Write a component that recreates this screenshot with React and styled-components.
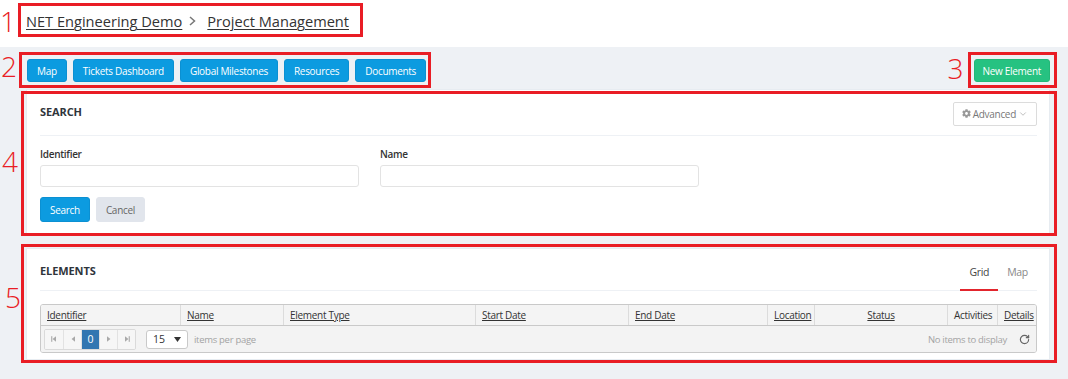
import React from "react";
import styled, { createGlobalStyle } from "styled-components";
import { ChevronDown, RotateCw } from "lucide-react";
import { FaCog } from "react-icons/fa";

const RED = "#e91d25";

const GlobalStyle = createGlobalStyle`
  html, body { margin: 0; padding: 0; }
  body {
    background: #eef1f5;
    font-family: "Open Sans", "Noto Sans", sans-serif;
    color: #333;
  }
  * { box-sizing: border-box; }
`;

const tones = {
  blue: { bg: "#0c9be0", border: "#0b90d2", fg: "#fff" },
  green: { bg: "#26c281", border: "#22b878", fg: "#fff" },
  grey: { bg: "#e1e5ec", border: "#e1e5ec", fg: "#666" },
};

// annotation overlay: red frame + number
const Mark = styled.div`
  position: relative;
  display: ${(p) => (p.$block ? "block" : "flex")};
  width: ${(p) => (p.$block ? "auto" : "fit-content")};
`;

const Frame = styled.div`
  position: absolute;
  top: ${(p) => p.$t}px;
  right: ${(p) => p.$r}px;
  bottom: ${(p) => p.$b}px;
  left: ${(p) => p.$l}px;
  border: 3px solid ${RED};
  pointer-events: none;
  z-index: 5;
`;

const Num = styled.span`
  position: absolute;
  left: ${(p) => p.$x}px;
  top: ${(p) => p.$y}px;
  font-size: 28px;
  line-height: 1;
  font-weight: 300;
  color: ${RED};
  z-index: 5;
`;

const Page = styled.div`
  min-height: 379px;
  background: #eef1f5;
`;

const TopBar = styled.header`
  background: #fff;
  height: 47px;
  padding: 11px 0 0 26px;
`;

const Crumbs = styled.nav`
  display: flex;
  align-items: center;
  font-size: 14.6px;
  line-height: 20px;
`;

const CrumbLink = styled.a`
  color: #333;
  text-decoration: underline;
  text-underline-offset: 2px;
  text-decoration-thickness: 1px;
`;

const CrumbSep = styled.span`
  display: flex;
  margin: 0 11px 0 7px;
`;

const Main = styled.main`
  padding: 12px 18px 0 26px;
`;

const Toolbar = styled.div`
  display: flex;
  justify-content: space-between;
  align-items: center;
`;

const ButtonGroup = styled.div`
  display: flex;
  gap: 6px;
  margin-left: 1px;
`;

const Btn = styled.button`
  font-family: inherit;
  font-size: 10px;
  letter-spacing: -0.3px;
  line-height: 1;
  height: ${(p) => p.$h || 23}px;
  padding: 0 ${(p) => p.$pad || 9}px;
  border-radius: 3px;
  border: 1px solid ${(p) => tones[p.$tone].border};
  background: ${(p) => tones[p.$tone].bg};
  color: ${(p) => tones[p.$tone].fg};
  cursor: pointer;
`;

const Cards = styled.div`
  display: flex;
  flex-direction: column;
  gap: 14px;
  margin-top: 7px;
`;

const Card = styled.section`
  background: #fff;
  border: 1px solid #e7ecf1;
  padding: 0 12px ${(p) => p.$pb}px 13px;
`;

const CardHead = styled.div`
  display: flex;
  align-items: center;
  justify-content: space-between;
  height: ${(p) => p.$h}px;
  border-bottom: 1px solid #eef1f5;
  padding-top: ${(p) => p.$pt || 0}px;
  padding-bottom: ${(p) => p.$pb || 0}px;
`;

const CardTitle = styled.h3`
  margin: 0;
  font-size: 11px;
  font-weight: 700;
  color: #2f353b;
  letter-spacing: -0.1px;
`;

const Advanced = styled.button`
  display: flex;
  align-items: center;
  gap: 2px;
  height: 24px;
  padding: 0 8px;
  margin-top: 5px;
  background: #fff;
  border: 1px solid #dcdcdc;
  border-radius: 2px;
  font-family: inherit;
  font-size: 10px;
  letter-spacing: -0.3px;
  color: #777;
`;

const FieldRow = styled.div`
  display: grid;
  grid-template-columns: 319px 319px;
  column-gap: 21px;
  margin-top: 11px;
`;

const Field = styled.div`
  display: flex;
  flex-direction: column;
  gap: 4px;
`;

const Label = styled.label`
  font-size: 10px;
  font-weight: 600;
  letter-spacing: -0.3px;
  line-height: 14px;
  color: #333;
`;

const Input = styled.input`
  height: 22px;
  border: 1px solid #e3e3e3;
  border-radius: 3px;
  background: #fff;
  outline: none;
`;

const Actions = styled.div`
  display: flex;
  gap: 6px;
  margin-top: 10px;
`;

const Tabs = styled.div`
  display: flex;
  align-self: stretch;
`;

const Tab = styled.div`
  display: flex;
  align-items: center;
  padding: 4px 9px 0;
  margin-bottom: -1px;
  border-bottom: 2px solid ${(p) => (p.$active ? "#e2252d" : "transparent")};
  font-size: 10.5px;
  letter-spacing: -0.3px;
  color: ${(p) => (p.$active ? "#444" : "#888")};
`;

const Table = styled.div`
  margin-top: 13px;
  border: 1px solid #c9c9c9;
  border-radius: 3px;
  overflow: hidden;
`;

const HeadRow = styled.div`
  display: grid;
  grid-template-columns: 139px 103px 192px 153px 139px 47px 133px 50px 1fr;
  height: 21px;
  background: #f4f4f4;
  border-bottom: 1px solid #c9c9c9;
`;

const Th = styled.div`
  display: flex;
  align-items: center;
  justify-content: ${(p) => (p.$center ? "center" : "flex-start")};
  padding-left: ${(p) => (p.$center ? 0 : 6)}px;
  border-left: ${(p) => (p.$first ? "none" : "1px solid #dcdcdc")};
  font-size: 10px;
  letter-spacing: -0.3px;
  color: #333;
  white-space: nowrap;
  text-decoration: ${(p) => (p.$plain ? "none" : "underline")};
  text-underline-offset: 1px;
`;

const PagerRow = styled.div`
  display: flex;
  align-items: center;
  height: 26px;
  padding: 0 6px 0 3px;
  background: #f3f3f3;
`;

const PageBtns = styled.div`
  display: flex;
  border: 1px solid #dadada;
  border-radius: 2px;
  overflow: hidden;
`;

const PageBtn = styled.div`
  display: flex;
  align-items: center;
  justify-content: center;
  width: 18px;
  height: 19px;
  border-left: ${(p) => (p.$first ? "none" : "1px solid #e2e2e2")};
  background: ${(p) => (p.$current ? "#3276b1" : "#f6f6f6")};
  color: #fff;
  font-size: 10.5px;
`;

const SizeSelect = styled.div`
  display: flex;
  align-items: center;
  justify-content: space-between;
  width: 42px;
  height: 19px;
  margin-left: 10px;
  padding: 0 6px 0 6px;
  background: #fff;
  border: 1px solid #c9c9c9;
  border-radius: 3px;
  font-size: 10.5px;
  color: #333;
`;

const Muted = styled.span`
  font-size: 9.5px;
  letter-spacing: -0.3px;
  color: #a3a3a3;
  margin-left: ${(p) => p.$ml || 0}px;
`;

const Spacer = styled.div`
  flex: 1;
`;

const Refresh = styled.span`
  display: flex;
  margin-left: 12px;
  color: #666;
`;

const Arrow = ({ dir, bar }) => (
  <svg width="8" height="8" viewBox="0 0 8 8">
    {dir === "left" ? (
      <path d="M6 1.2 L2.6 4 L6 6.8Z" fill="#a9a9a9" />
    ) : (
      <path d="M2 1.2 L5.4 4 L2 6.8Z" fill="#a9a9a9" />
    )}
    {bar &&
      (dir === "left" ? (
        <rect x="1.2" y="1.2" width="1.1" height="5.6" fill="#a9a9a9" />
      ) : (
        <rect x="5.7" y="1.2" width="1.1" height="5.6" fill="#a9a9a9" />
      ))}
  </svg>
);

const columns = [
  { name: "Identifier" },
  { name: "Name" },
  { name: "Element Type" },
  { name: "Start Date" },
  { name: "End Date" },
  { name: "Location" },
  { name: "Status", center: true },
  { name: "Activities", plain: true },
  { name: "Details" },
];

const navButtons = ["Map", "Tickets Dashboard", "Global Milestones", "Resources", "Documents"];

export default function App() {
  return (
    <Page>
      <GlobalStyle />
      <TopBar>
        <Mark>
          <Crumbs>
            <CrumbLink href="#">NET Engineering Demo</CrumbLink>
            <CrumbSep>
              <svg width="7" height="10" viewBox="0 0 7 10">
                <path d="M1 1 L5.5 5 L1 9" fill="none" stroke="#777" strokeWidth="1.5" />
              </svg>
            </CrumbSep>
            <CrumbLink href="#">Project Management</CrumbLink>
          </Crumbs>
          <Frame $t={-8} $r={-14} $b={-6} $l={-8} />
          <Num $x={-26} $y={-4}>1</Num>
        </Mark>
      </TopBar>

      <Main>
        <Toolbar>
          <Mark>
            <ButtonGroup>
              {navButtons.map((b) => (
                <Btn key={b} $tone="blue">{b}</Btn>
              ))}
            </ButtonGroup>
            <Frame $t={-7} $r={-5} $b={-6} $l={-7} />
            <Num $x={-25} $y={-7}>2</Num>
          </Mark>
          <Mark>
            <Btn $tone="green" $pad={8}>New Element</Btn>
            <Frame $t={-7} $r={-7} $b={-6} $l={-6} />
            <Num $x={-26} $y={-5}>3</Num>
          </Mark>
        </Toolbar>

        <Cards>
          <Mark $block>
            <Card $pb={11}>
              <CardHead $h={46} $pb={3}>
                <CardTitle>SEARCH</CardTitle>
                <Advanced>
                  <FaCog size={9} color="#999" />
                  <span>Advanced</span>
                  <ChevronDown size={10} color="#999" strokeWidth={1.5} />
                </Advanced>
              </CardHead>
              <FieldRow>
                <Field>
                  <Label>Identifier</Label>
                  <Input />
                </Field>
                <Field>
                  <Label>Name</Label>
                  <Input />
                </Field>
              </FieldRow>
              <Actions>
                <Btn $tone="blue" $h={25} $pad={9}>Search</Btn>
                <Btn $tone="grey" $h={25} $pad={9}>Cancel</Btn>
              </Actions>
            </Card>
            <Frame $t={2} $r={-7} $b={-2} $l={-5} />
            <Num $x={-24} $y={58}>4</Num>
          </Mark>

          <Mark $block>
            <Card $pb={6}>
              <CardHead $h={42} $pt={2}>
                <CardTitle>ELEMENTS</CardTitle>
                <Tabs>
                  <Tab $active>Grid</Tab>
                  <Tab>Map</Tab>
                </Tabs>
              </CardHead>
              <Table>
                <HeadRow>
                  {columns.map((c, i) => (
                    <Th key={c.name} $first={i === 0} $center={c.center} $plain={c.plain}>
                      {c.name}
                    </Th>
                  ))}
                </HeadRow>
                <PagerRow>
                  <PageBtns>
                    <PageBtn $first><Arrow dir="left" bar /></PageBtn>
                    <PageBtn><Arrow dir="left" /></PageBtn>
                    <PageBtn $current>0</PageBtn>
                    <PageBtn><Arrow dir="right" /></PageBtn>
                    <PageBtn><Arrow dir="right" bar /></PageBtn>
                  </PageBtns>
                  <SizeSelect>
                    <span>15</span>
                    <svg width="7" height="5" viewBox="0 0 7 5">
                      <path d="M0 0 L7 0 L3.5 5Z" fill="#333" />
                    </svg>
                  </SizeSelect>
                  <Muted $ml={6}>items per page</Muted>
                  <Spacer />
                  <Muted>No items to display</Muted>
                  <Refresh>
                    <RotateCw size={11} strokeWidth={2.6} />
                  </Refresh>
                </PagerRow>
              </Table>
            </Card>
            <Frame $t={-4} $r={-7} $b={-3} $l={-5} />
            <Num $x={-21} $y={35}>5</Num>
          </Mark>
        </Cards>
      </Main>
    </Page>
  );
}
